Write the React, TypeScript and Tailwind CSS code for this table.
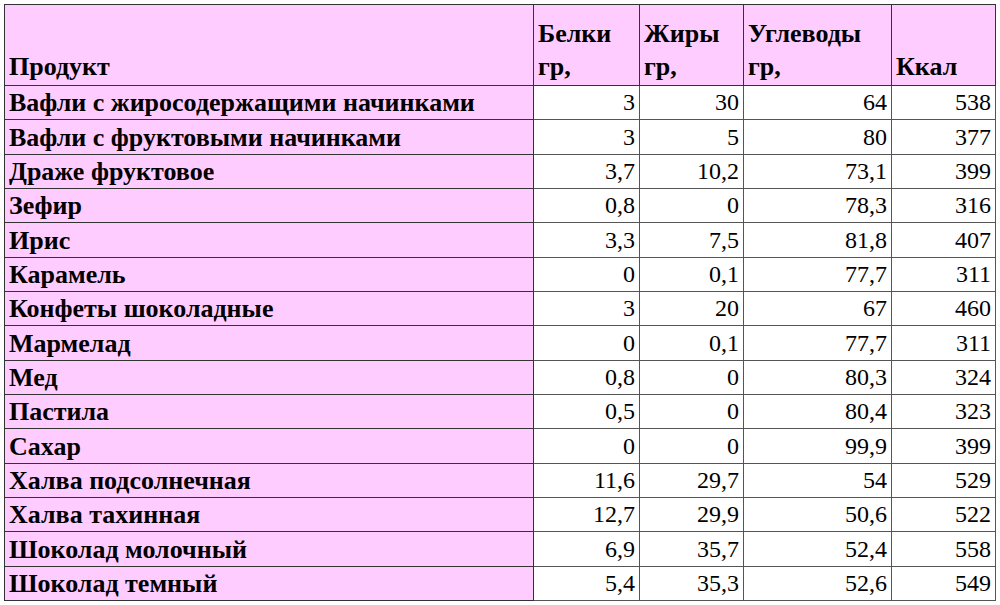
const rows: [string, string, string, string, string][] = [
  ["Вафли с жиросодержащими начинками", "3", "30", "64", "538"],
  ["Вафли с фруктовыми начинками", "3", "5", "80", "377"],
  ["Драже фруктовое", "3,7", "10,2", "73,1", "399"],
  ["Зефир", "0,8", "0", "78,3", "316"],
  ["Ирис", "3,3", "7,5", "81,8", "407"],
  ["Карамель", "0", "0,1", "77,7", "311"],
  ["Конфеты шоколадные", "3", "20", "67", "460"],
  ["Мармелад", "0", "0,1", "77,7", "311"],
  ["Мед", "0,8", "0", "80,3", "324"],
  ["Пастила", "0,5", "0", "80,4", "323"],
  ["Сахар", "0", "0", "99,9", "399"],
  ["Халва подсолнечная", "11,6", "29,7", "54", "529"],
  ["Халва тахинная", "12,7", "29,9", "50,6", "522"],
  ["Шоколад молочный", "6,9", "35,7", "52,4", "558"],
  ["Шоколад темный", "5,4", "35,3", "52,6", "549"],
];

const head =
  "font-['Liberation_Serif'] text-black border border-[#333] bg-[#ffccff] font-bold text-[26px] text-left align-bottom px-[4px] pb-[2px] leading-[33px]";
const name =
  "font-['Liberation_Serif'] text-black border border-[#333] bg-[#ffccff] font-bold text-[26px] text-left align-bottom px-[4px] pb-[3px] leading-[27px] whitespace-nowrap";
const num =
  "font-['Liberation_Serif'] text-black border border-[#555] bg-white font-normal text-[24px] text-right align-bottom px-[4px] pb-[3px] leading-[27px]";

export default function App() {
  return (
    <div className="w-[1000px] h-[605px] bg-white pl-[4px] pt-[4px]">
      <table className="font-['Liberation_Serif'] border-collapse table-fixed w-[991px]">
        <colgroup>
          <col className="w-[529px]" />
          <col className="w-[106px]" />
          <col className="w-[104px]" />
          <col className="w-[148px]" />
          <col className="w-[104px]" />
        </colgroup>
        <thead>
          <tr className="h-[81px]">
            <th className={head}>Продукт</th>
            <th className={head}>
              Белки
              <br />
              гр,
            </th>
            <th className={head}>
              Жиры
              <br />
              гр,
            </th>
            <th className={head}>
              Углеводы
              <br />
              гр,
            </th>
            <th className={head}>Ккал</th>
          </tr>
        </thead>
        <tbody>
          {rows.map((r) => (
            <tr key={r[0]} className="h-[34.33px]">
              <td className={name}>{r[0]}</td>
              <td className={num}>{r[1]}</td>
              <td className={num}>{r[2]}</td>
              <td className={num}>{r[3]}</td>
              <td className={num}>{r[4]}</td>
            </tr>
          ))}
        </tbody>
      </table>
    </div>
  );
}
